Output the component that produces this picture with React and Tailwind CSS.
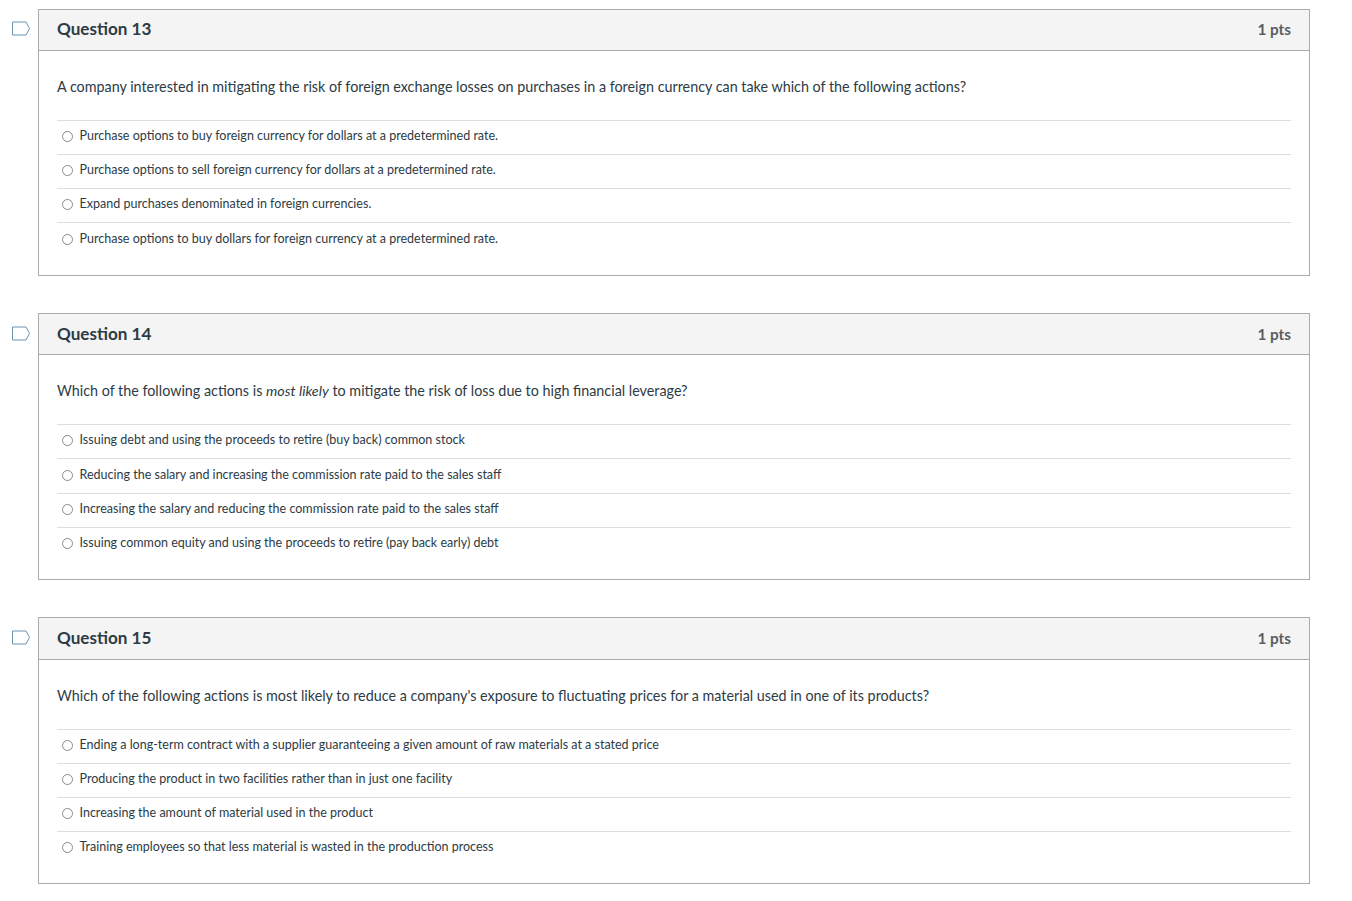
const questions = [
  {
    n: 13, mt: "mt-[9px]", hh: "h-[39px]", hp: "pb-[1px]", tm: "mb-[2px]", ft: "pt-[10.5px]", tall: 3,
    q: <>A company interested in mitigating the risk of foreign exchange losses on purchases in a foreign currency can take which of the following actions?</>,
    o: ["Purchase options to buy foreign currency for dollars at a predetermined rate.", "Purchase options to sell foreign currency for dollars at a predetermined rate.", "Expand purchases denominated in foreign currencies.", "Purchase options to buy dollars for foreign currency at a predetermined rate."],
  },
  {
    n: 14, mt: "mt-[37px]", hh: "h-[40px]", hp: "", tm: "", ft: "pt-[11.5px]", tall: 1,
    q: <>Which of the following actions is <em>most likely</em> to mitigate the risk of loss due to high financial leverage?</>,
    o: ["Issuing debt and using the proceeds to retire (buy back) common stock", "Reducing the salary and increasing the commission rate paid to the sales staff", "Increasing the salary and reducing the commission rate paid to the sales staff", "Issuing common equity and using the proceeds to retire (pay back early) debt"],
  },
  {
    n: 15, mt: "mt-[37px]", hh: "h-[40px]", hp: "pb-[1px]", tm: "", ft: "pt-[11.5px]", tall: -1,
    q: <>Which of the following actions is most likely to reduce a company's exposure to fluctuating prices for a material used in one of its products?</>,
    o: ["Ending a long-term contract with a supplier guaranteeing a given amount of raw materials at a stated price", "Producing the product in two facilities rather than in just one facility", "Increasing the amount of material used in the product", "Training employees so that less material is wasted in the production process"],
  },
];

function Flag() {
  return (
    <svg width="20" height="16" viewBox="0 0 20 16" className="block">
      <path d="M1.5 2H15L18.5 8.5L15 15H1.5Z" fill="none" stroke="#6a94b0" strokeWidth="1" />
    </svg>
  );
}

function Question({ n, mt, hh, hp, tm, ft, tall, q, o }) {
  return (
    <div className={`flex ${mt}`}>
      <div className={`w-[38px] shrink-0 pl-[11px] ${ft}`}>
        <Flag />
      </div>
      <div className="w-[1272px] border border-[#aaaaaa] bg-white">
        <div className={`flex ${hh} ${hp} items-center justify-between border-b border-[#aaaaaa] bg-[#f4f4f4] pl-[18px] pr-[18px] box-content`}>
          <span className={`text-[17.1px] font-bold text-[#2d3b45] ${tm}`}>Question {n}</span>
          <span className="text-[15.3px] font-bold text-[#5a5f63]">1 pts</span>
        </div>
        <div className="px-[18px]">
          <div className="flex h-[69px] items-center pt-[3px] text-[14.34px] text-[#2d3b45]">
            <p>{q}</p>
          </div>
          <div className="pb-[18px]">
            {o.map((t, i) => (
              <div key={t} className={`flex items-center border-t border-[#dddddd] pb-[3px] pl-[5px] text-[12.52px] text-[#2d3b45] ${i === tall ? "h-[35px] pt-[1px]" : "h-[34px]"}`}>
                <span className="mr-[6.5px] h-[11px] w-[11px] shrink-0 rounded-full border border-[#8a8a8a] bg-white" />
                <span>{t}</span>
              </div>
            ))}
          </div>
        </div>
      </div>
    </div>
  );
}

export default function App() {
  return (
    <div className="h-[901px] overflow-hidden bg-white font-['Lato','Carlito','Liberation_Sans',sans-serif]">
      {questions.map((x) => <Question key={x.n} {...x} />)}
    </div>
  );
}
